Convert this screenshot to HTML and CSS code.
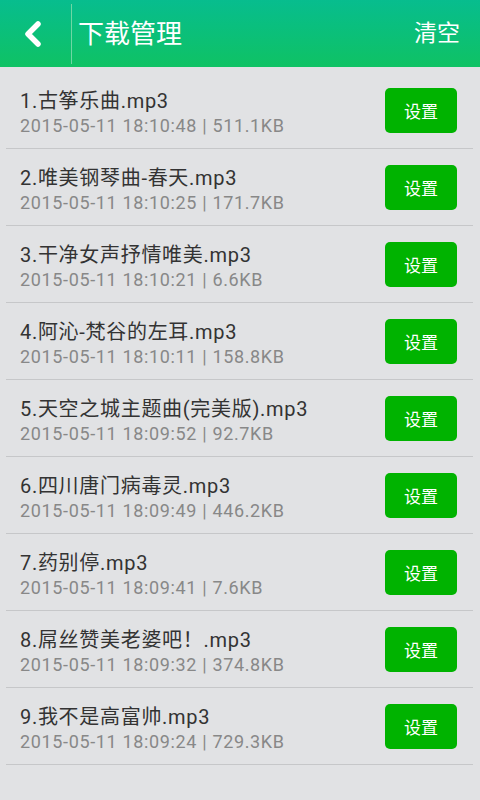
FILE: index.html
```html
<!DOCTYPE html>
<html lang="zh">
<head>
<meta charset="utf-8">
<title>下载管理</title>
<link rel="stylesheet" href="styles.css">
</head>
<body>
<header class="topbar">
  <div class="back">
    <svg width="22" height="28" viewBox="0 0 22 28"><path d="M16 4 L6 14 L16 24" fill="none" stroke="#fff" stroke-width="5.5" stroke-linecap="round" stroke-linejoin="round"/></svg>
  </div>
  <div class="divider"></div>
  <h1 class="title">下载管理</h1>
  <div class="clear">清空</div>
</header>
<ul class="list">
  <li class="row"><div class="info"><div class="name">1.古筝乐曲.mp3</div><div class="meta">2015-05-11 18:10:48 | 511.1KB</div></div><button class="btn">设置</button></li>
  <li class="row"><div class="info"><div class="name">2.唯美钢琴曲-春天.mp3</div><div class="meta">2015-05-11 18:10:25 | 171.7KB</div></div><button class="btn">设置</button></li>
  <li class="row"><div class="info"><div class="name">3.干净女声抒情唯美.mp3</div><div class="meta">2015-05-11 18:10:21 | 6.6KB</div></div><button class="btn">设置</button></li>
  <li class="row"><div class="info"><div class="name">4.阿沁-梵谷的左耳.mp3</div><div class="meta">2015-05-11 18:10:11 | 158.8KB</div></div><button class="btn">设置</button></li>
  <li class="row"><div class="info"><div class="name">5.天空之城主题曲(完美版).mp3</div><div class="meta">2015-05-11 18:09:52 | 92.7KB</div></div><button class="btn">设置</button></li>
  <li class="row"><div class="info"><div class="name">6.四川唐门病毒灵.mp3</div><div class="meta">2015-05-11 18:09:49 | 446.2KB</div></div><button class="btn">设置</button></li>
  <li class="row"><div class="info"><div class="name">7.药别停.mp3</div><div class="meta">2015-05-11 18:09:41 | 7.6KB</div></div><button class="btn">设置</button></li>
  <li class="row"><div class="info"><div class="name">8.屌丝赞美老婆吧！.mp3</div><div class="meta">2015-05-11 18:09:32 | 374.8KB</div></div><button class="btn">设置</button></li>
  <li class="row"><div class="info"><div class="name">9.我不是高富帅.mp3</div><div class="meta">2015-05-11 18:09:24 | 729.3KB</div></div><button class="btn">设置</button></li>
</ul>
</body>
</html>
```
FILE: styles.css
```css
html, body {
  margin: 0;
  padding: 0;
}
body {
  width: 480px;
  height: 800px;
  background: #e1e2e4;
  font-family: Roboto, "Noto Sans CJK SC", sans-serif;
  overflow: hidden;
}
.topbar {
  height: 67px;
  display: flex;
  align-items: center;
  background: linear-gradient(to bottom, #07bd8e, #0fc264);
  color: #fff;
}
.back {
  width: 71px;
  display: flex;
  justify-content: center;
  box-sizing: border-box;
}
.back svg {
  display: block;
  margin-left: -5px;
}
.divider {
  width: 1px;
  height: 60px;
  background: #6fd7a4;
}
.title {
  margin: 0 0 0 6px;
  font-size: 26px;
  font-weight: normal;
  flex: 1;
  line-height: 1;
}
.clear {
  font-size: 23px;
  margin-right: 20px;
  line-height: 1;
}
.list {
  list-style: none;
  margin: 0;
  padding: 5px 7px 0 6px;
}
.row {
  height: 76px;
  border-bottom: 1px solid #c6c7c9;
  display: flex;
  align-items: center;
  justify-content: space-between;
  padding: 0 16px 0 14px;
}
.info {
  display: flex;
  flex-direction: column;
  padding-top: 6px;
}
.name {
  font-size: 20px;
  color: #333;
  line-height: 26px;
  letter-spacing: 0.7px;
}
.meta {
  font-size: 18px;
  color: #888;
  line-height: 24px;
  letter-spacing: 0.65px;
}
.btn {
  width: 72px;
  height: 45px;
  border: none;
  border-radius: 5px;
  background: #00b300;
  color: #fff;
  font-family: Roboto, "Noto Sans CJK SC", sans-serif;
  font-size: 17px;
  padding: 0;
}
```
